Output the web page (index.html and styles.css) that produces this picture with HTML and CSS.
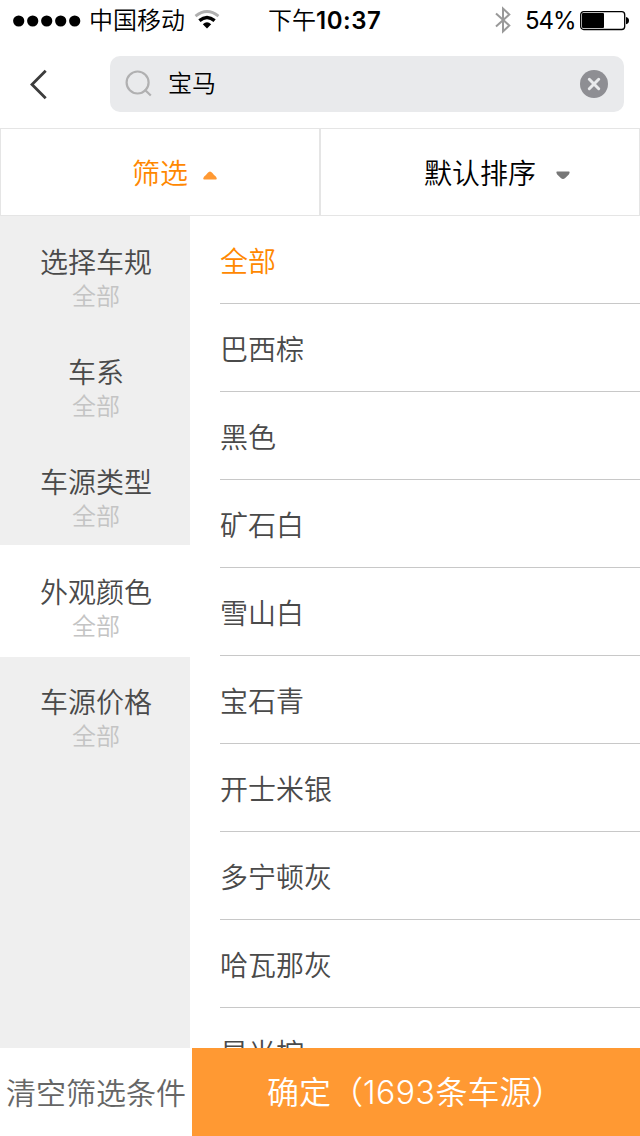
FILE: index.html
```html
<!DOCTYPE html>
<html lang="zh-CN">
<head>
<meta charset="utf-8">
<title>宝马</title>
<link rel="stylesheet" href="styles.css">
</head>
<body>
<div class="screen">
  <header class="status">
    <div class="status-left">
      <svg class="signal" width="68" height="12" viewBox="0 0 68 12"><circle cx="5.7" cy="6" r="5.6"/><circle cx="19.7" cy="6" r="5.6"/><circle cx="33.7" cy="6" r="5.6"/><circle cx="47.7" cy="6" r="5.6"/><circle cx="61.7" cy="6" r="5.6"/></svg>
      <span class="carrier">中国移动</span>
      <svg class="wifi" width="26" height="20" viewBox="0 0 26 20" fill="none"><path d="M1.5 6.2Q13-3.2 24.5 6.2" stroke="#b0b0b0" stroke-width="2.8"/><path d="M5.4 10.6Q13 4.2 20.6 10.6" stroke="#000" stroke-width="3.4"/><path d="M8.8 14.2Q13 10.4 17.2 14.2L13 18.6Z" fill="#000"/></svg>
    </div>
    <div class="time">下午<b>10:37</b></div>
    <div class="status-right">
      <svg class="bluetooth" width="16" height="28" viewBox="0 0 16 28" fill="none" stroke="#999" stroke-width="2"><path d="M1 7.5L14.3 19.5L8 25.4V2.6L14.3 8.5L1 20.5"/></svg>
      <span class="percent">54%</span>
      <svg class="battery" width="50" height="20" viewBox="0 0 50 20"><rect x=".7" y=".7" width="44" height="17.8" rx="3" fill="none" stroke="#000" stroke-width="1.3"/><rect x="2" y="2" width="22" height="15" rx="1"/><path d="M46 6Q49 6.5 49 9.6T46 13.2Z"/></svg>
    </div>
  </header>
  <div class="nav">
    <svg class="back" width="20" height="32" viewBox="0 0 20 32" fill="none" stroke="#3c3c3c" stroke-width="2.8"><path d="M16.7 2.8L3 16.5L16.7 30.2"/></svg>
    <div class="search">
      <svg class="magnifier" width="28" height="28" viewBox="0 0 28 28" fill="none" stroke="#b0b0b1" stroke-width="2.2"><circle cx="12.6" cy="12.5" r="11"/><path d="M19.5 19.5L25.8 25.5"/></svg>
      <span class="query">宝马</span>
      <svg width="28" height="28" viewBox="0 0 28 28"><circle cx="14" cy="14" r="14" fill="#8e8e93"/><path d="M9.3 9.3L18.7 18.7M18.7 9.3L9.3 18.7" stroke="#e9eaec" stroke-width="3" stroke-linecap="round"/></svg>
    </div>
  </div>
  <div class="tabs">
    <div class="tab tab-filter"><span>筛选</span><svg class="arrow-up" width="14" height="9" viewBox="0 0 14 9"><path d="M.8 8.4Q-.5 7.6 1.2 5.4Q3 4.2 4.6 2Q7-1 9.4 2Q11 4.2 12.8 5.4Q14.5 7.6 13.2 8.4Z" fill="#ff9933"/></svg></div>
    <div class="tab tab-sort"><span>默认排序</span><svg class="arrow-down" width="14" height="9" viewBox="0 0 14 9"><path d="M.8.6Q-.2 1.6 1.2 3.4L4.8 7Q7 9.2 9.2 7L12.8 3.4Q14.2 1.6 13.2.6Z" fill="#777"/></svg></div>
  </div>
  <main class="content">
    <aside class="sidebar">
      <div class="group"><div>选择车规</div><div class="value">全部</div></div>
      <div class="group"><div>车系</div><div class="value">全部</div></div>
      <div class="group"><div>车源类型</div><div class="value">全部</div></div>
      <div class="group active"><div>外观颜色</div><div class="value">全部</div></div>
      <div class="group"><div>车源价格</div><div class="value">全部</div></div>
    </aside>
    <div class="options">
      <div class="option selected">全部</div>
      <div class="option">巴西棕</div>
      <div class="option">黑色</div>
      <div class="option">矿石白</div>
      <div class="option">雪山白</div>
      <div class="option">宝石青</div>
      <div class="option">开士米银</div>
      <div class="option">多宁顿灰</div>
      <div class="option">哈瓦那灰</div>
      <div class="option">星光棕</div>
    </div>
  </main>
  <footer class="footer">
    <div class="clear">清空筛选条件</div>
    <div class="confirm">确定（<span class="count">1693</span>条车源）</div>
  </footer>
</div>
</body>
</html>
```
FILE: styles.css
```css
* { box-sizing: border-box; }
body { margin: 0; background: #fff; }
svg { display: block; flex: none; }
.screen {
  width: 640px;
  height: 1136px;
  display: flex;
  flex-direction: column;
  overflow: hidden;
  font-family: Inter, "Noto Sans CJK SC DemiLight", "Noto Sans CJK SC", sans-serif;
  font-weight: 350;
  font-size: 28px;
  color: #4a4a4a;
  white-space: nowrap;
}
.status {
  height: 40px;
  display: grid;
  grid-template-columns: 268px 1fr 145px;
  align-items: center;
  font-size: 24px;
  line-height: 38px;
  font-weight: 400;
  color: #000;
}
.status-left, .status-right { display: flex; align-items: center; height: 40px; }
.status-left { padding-left: 13px; }
.carrier { margin-left: 8px; padding-top: 2px; }
.signal { margin-top: 1px; }
.wifi { margin-left: 9px; }
.time { padding-top: 2px; font-weight: 500; }
.time b { font-weight: 600; letter-spacing: 0.5px; }
.percent { width: 64px; padding: 2px 0 0 14px; letter-spacing: -1px; }
.battery { margin: 1px 0 0 5px; }
.nav {
  height: 88px;
  display: flex;
  align-items: center;
  padding: 0 16px 0 29px;
}
.search {
  flex: 1;
  height: 56px;
  margin-left: 61px;
  padding: 0 16px 0 15px;
  display: flex;
  align-items: center;
  border-radius: 10px;
  background: #e9eaec;
}
.query {
  flex: 1;
  margin-left: 15px;
  font-size: 24px;
  line-height: 56px;
  font-weight: 400;
  color: #000;
}
.tabs { display: flex; height: 88px; }
.tab {
  width: 320px;
  border: 1px solid #e5e5e5;
  display: flex;
  align-items: center;
  line-height: 82px;
  font-weight: 400;
}
.tab span { padding-top: 3px; }
.tab-filter { padding-left: 131px; color: #ff8800; }
.tab-sort { padding-left: 103px; color: #000; }
.arrow-up, .arrow-down { margin-top: 7px; }
.arrow-up { margin-left: 15px; }
.arrow-down { margin-left: 20px; }
.content { height: 832px; display: flex; overflow: hidden; }
.sidebar { width: 190px; background: #efefef; text-align: center; line-height: 34px; }
.group { height: 110px; padding: 31px 0 0 2px; }
.group:first-child { height: 109px; padding-top: 30px; }
.group.active { height: 112px; margin-bottom: -2px; background: #fff; }
.value { font-size: 24px; color: #c4c4c4; }
.options { flex: 1; padding-left: 30px; }
.option { height: 88px; padding-top: 4px; line-height: 84px; border-bottom: 1px solid #c8c8c8; }
.option.selected { color: #ff8800; }
.footer { height: 88px; display: flex; line-height: 88px; text-align: center; }
.clear { width: 192px; padding-top: 2px; line-height: 86px; font-size: 30px; color: #666; }
.confirm {
  flex: 1;
  padding: 2px 0 0;
  line-height: 86px;
  font-size: 32px;
  background: #ff9933;
  color: #fff;
}
.confirm { text-align: left; padding-left: 75px; }
.count { letter-spacing: 0.5px; }
```
